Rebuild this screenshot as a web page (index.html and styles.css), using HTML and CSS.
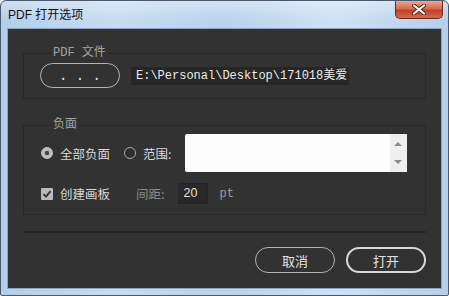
FILE: index.html
```html
<!DOCTYPE html>
<html lang="zh-CN">
<head>
  <meta charset="UTF-8">
  <title>PDF 打开选项</title>
  <link rel="stylesheet" href="styles.css">
</head>
<body>

<div class="window">
  <div class="titlebar">
    <span class="title">PDF 打开选项</span>
    <div class="close-btn">
      <svg width="16" height="11" viewBox="0 0 16 11">
        <path d="M3 1.5 L13 9.5 M13 1.5 L3 9.5" stroke="#5a1d12" stroke-width="4" stroke-linecap="round"/>
        <path d="M3 1.5 L13 9.5 M13 1.5 L3 9.5" stroke="#ffffff" stroke-width="2.2" stroke-linecap="round"/>
      </svg>
    </div>
  </div>

  <div class="client">
    <fieldset class="group group-file">
      <legend>PDF 文件</legend>
      <div class="row">
        <button class="pill browse">. . .</button>
        <div class="path-field">E:\Personal\Desktop\171018美爱</div>
      </div>
    </fieldset>

    <fieldset class="group group-pages">
      <legend>负面</legend>
      <div class="row range-row">
        <label class="opt"><span class="radio checked"></span>全部负面</label>
        <label class="opt opt-range"><span class="radio"></span>范围:</label>
        <div class="range-box">
          <div class="spin">
            <span class="arrow up"></span>
            <span class="arrow down"></span>
          </div>
        </div>
      </div>
      <div class="row board-row">
        <label class="opt"><span class="checkbox">
          <svg width="12" height="12" viewBox="0 0 12 12"><path d="M2.5 6.2 L5 8.6 L9.6 3.2" fill="none" stroke="#333" stroke-width="1.8"/></svg>
        </span>创建画板</label>
        <span class="dim-label">间距:</span>
        <div class="num-field">20</div>
        <span class="unit">pt</span>
      </div>
    </fieldset>

    <div class="separator"></div>

    <div class="actions">
      <button class="pill">取消</button>
      <button class="pill default">打开</button>
    </div>
  </div>
</div>

</body>
</html>
```

FILE: styles.css
```css
body {
  margin: 0;
  padding: 0;
  font-family: "Liberation Sans", "Noto Sans CJK SC", sans-serif;
}
.window {
  width: 449px;
  height: 296px;
  box-sizing: border-box;
  display: flex;
  flex-direction: column;
  background: linear-gradient(to right, #b4cde8, #c7dcf2 25%, #bad2ec 50%, #cfe1f4 75%, #b6cfea);
  border: 1px solid #4a5a6e;
  border-radius: 6px 6px 2px 2px;
}
.titlebar {
  height: 28px;
  display: flex;
  align-items: flex-start;
  background: linear-gradient(to bottom, rgba(255, 255, 255, 0.35), rgba(255, 255, 255, 0) 70%);
  border-radius: 6px 6px 0 0;
}
.title {
  margin: 7px 0 0 7px;
  font-size: 12px;
  line-height: 14px;
  color: #111;
}
.close-btn {
  margin-left: auto;
  margin-right: 5px;
  width: 48px;
  height: 18px;
  box-sizing: border-box;
  display: flex;
  align-items: center;
  justify-content: center;
  border: 1px solid #6e2a1e;
  border-top: none;
  border-radius: 0 0 5px 5px;
  background: linear-gradient(to bottom, #e9a899, #d66a52 45%, #c2402a 55%, #d4684e);
}
.client {
  flex: 1;
  margin: 0 7px 7px 7px;
  padding: 0 15px;
  background: #323232;
  box-shadow: 0 0 0 1px #8aa5c4;
  display: flex;
  flex-direction: column;
}
.group {
  margin: 0;
  min-width: 0;
  border: 1px solid #282828;
  color: #d6d6d6;
  font-size: 12.5px;
}
.group legend {
  margin-left: 11px;
  padding: 0 2px;
  font-family: "Liberation Mono", "Noto Sans CJK SC", monospace;
  font-size: 12px;
  line-height: 14px;
  color: #a4a4a4;
}
.group-file {
  margin-top: 17px;
  padding: 3px 15px 10px 16px;
}
.group-pages {
  margin-top: 19px;
  padding: 2px 17px 10px 16px;
}
.row {
  display: flex;
  align-items: center;
}
.pill {
  box-sizing: border-box;
  width: 80px;
  height: 26px;
  border: 1.5px solid #b4b4b4;
  border-radius: 13px;
  background: transparent;
  color: #e2e2e2;
  font-family: "Noto Sans CJK SC", sans-serif;
  font-size: 13px;
  padding: 0;
  cursor: pointer;
}
.pill.default {
  border: 2px solid #d8d8d8;
}
.browse {
  height: 25px;
  font-family: "Liberation Mono", monospace;
  font-size: 14px;
  line-height: 14px;
  padding-top: 1px;
}
.path-field {
  margin-left: 11px;
  width: 218px;
  height: 18px;
  box-sizing: border-box;
  padding-left: 5px;
  background: #262626;
  color: #ececec;
  font-family: "Liberation Mono", "Noto Sans CJK SC", monospace;
  font-size: 12px;
  line-height: 18px;
  white-space: nowrap;
}
.opt {
  display: inline-flex;
  align-items: center;
  font-family: "Noto Sans CJK SC", sans-serif;
  color: #d8d8d8;
}
.radio {
  width: 12px;
  height: 12px;
  box-sizing: border-box;
  margin: 0 7px 0 1px;
  border: 1px solid #a8a8a8;
  border-radius: 50%;
  background: #2e2e2e;
}
.radio.checked {
  border-color: #c4c4c4;
  background: radial-gradient(circle, #444 0, #444 2px, #bdbdbd 2.6px);
}
.opt-range {
  margin-left: 13px;
}
.range-box {
  margin-left: 13px;
  width: 222px;
  height: 38px;
  display: flex;
  justify-content: flex-end;
  background: #fdfdfd;
  border-radius: 2px;
}
.spin {
  width: 17px;
  display: flex;
  flex-direction: column;
  justify-content: space-between;
  align-items: center;
  padding: 8px 0 8px;
  background: #eeeeee;
}
.arrow {
  width: 0;
  height: 0;
  border-left: 4px solid transparent;
  border-right: 4px solid transparent;
}
.arrow.up {
  border-bottom: 4px solid #8a8a8a;
}
.arrow.down {
  border-top: 4px solid #8a8a8a;
}
.board-row {
  margin-top: 11px;
}
.checkbox {
  width: 12px;
  height: 12px;
  margin: 0 7px 0 1px;
  background: #b9b9b9;
  border-radius: 1px;
  display: flex;
}
.dim-label {
  margin-left: 26px;
  font-family: "Noto Sans CJK SC", sans-serif;
  color: #8c8c8c;
}
.num-field {
  margin-left: 13px;
  width: 30px;
  height: 21px;
  box-sizing: border-box;
  padding-left: 5px;
  background: #282828;
  border: 1px solid #252525;
  color: #e0e0e0;
  font-size: 12.5px;
  line-height: 19px;
}
.unit {
  margin-left: 12px;
  font-family: "Liberation Mono", monospace;
  font-size: 12px;
  color: #9c9c9c;
}
.separator {
  margin-top: 16px;
  height: 2px;
  background: #262626;
}
.actions {
  margin-top: 14px;
  display: flex;
  justify-content: flex-end;
  gap: 11px;
}
```
